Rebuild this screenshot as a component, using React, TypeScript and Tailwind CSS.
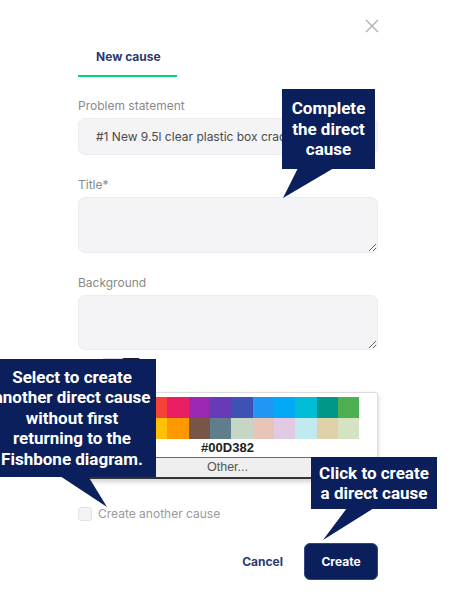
const NAVY = 'bg-[#0a1f5c]';

const row1 = ['#212121', '#9e9e9e', '#ffffff', '#f44336', '#e91e63', '#9c27b0', '#673ab7', '#3f51b5', '#2196f3', '#03a9f4', '#00bcd4', '#009688', '#4caf50'];
const row2 = ['#8bc34a', '#cddc39', '#ffeb3b', '#ffc107', '#ff9800', '#795548', '#607d8b', '#c5d6c5', '#e8c3b8', '#e1cbe2', '#c0e9f0', '#e0d2a8', '#d6e3c2'];

function Callout({ className, lines }: { className: string; lines: string[] }) {
  return (
    <div
      className={`absolute ${NAVY} flex flex-col items-center justify-center text-white font-bold text-[17px] leading-[20.5px] text-center font-['Roboto',sans-serif] ${className}`}
    >
      {lines.map(l => (
        <span key={l} className="whitespace-nowrap">{l}</span>
      ))}
    </div>
  );
}

export default function App() {
  return (
    <div className="relative w-[450px] h-[600px] bg-white overflow-hidden font-['Inter',sans-serif]">
      <div className="pt-[19px] pl-[78px] w-[378px]">
        <div className="flex justify-end">
          <svg width="14" height="14" viewBox="0 0 14 14" className="mr-[-1px]">
            <path d="M1 1L13 13M13 1L1 13" stroke="#b0b0b0" strokeWidth="1.4" />
          </svg>
        </div>

        <div className="mt-[16px] w-[99px] border-b-2 border-[#00d382] pb-[10px] pl-[18px] text-[12px] leading-[16px] font-bold text-[#2b3a70]">
          New cause
        </div>

        <div className="mt-[21px] text-[12px] leading-[16px] text-[#8a8a8a]">Problem statement</div>
        <div className="mt-[4px] h-[37px] rounded-[7px] bg-[#f4f4f6] border border-[#ededf0] flex items-center pl-[17px] pr-3 overflow-hidden whitespace-nowrap text-[12px] text-[#4a4a4a]">
          #1 New 9.5l clear plastic box cracked
        </div>

        <div className="mt-[22px] text-[12px] leading-[16px] text-[#8a8a8a]">Title*</div>
        <textarea className="mt-[4px] block w-full h-[56px] rounded-[7px] bg-[#f4f4f6] border border-[#ededf0] outline-none" />

        <div className="mt-[22px] text-[12px] leading-[16px] text-[#8a8a8a]">Background</div>
        <textarea className="mt-[4px] block w-full h-[55px] rounded-[7px] bg-[#f4f4f6] border border-[#ededf0] outline-none" />

        <div className="mt-[8px] h-[24px] flex items-start pl-[25px]">
          <div className="w-[19px] h-[18px] bg-[#d9d9df]" />
          <div className="w-[18px] h-[18px] bg-[#1c1c24] rounded-[2px]" />
        </div>

        <div className="mt-[125px] flex items-center gap-[6px] h-[14px]">
          <div className="w-[14px] h-[14px] rounded-[3px] border border-[#e2e2e6] bg-[#f4f4f6]" />
          <span className="text-[12px] leading-[16px] text-[#9a9a9a]">Create another cause</span>
        </div>

        <div className="mt-[22px] flex justify-end items-center gap-[21px]">
          <button className="text-[12px] font-bold text-[#2b3a70]">Cancel</button>
          <button className="h-[37px] w-[74px] rounded-[6px] bg-[#0a1f5c] border border-[#33467e] text-white text-[12px] font-bold">
            Create
          </button>
        </div>
      </div>

      {/* colour picker popover */}
      <div className="absolute left-[77px] top-[392px] w-[301px] h-[88px] bg-white border border-[#dcdcdc] rounded-[3px] shadow-[0_2px_5px_rgba(0,0,0,0.18)] flex flex-col">
        <div className="pt-[4px] pl-[4px] flex flex-col">
          <div className="flex">
            {row1.map(c => (
              <div key={c} className="w-[21.33px] h-[21px]" style={{ backgroundColor: c }} />
            ))}
          </div>
          <div className="flex">
            {row2.map(c => (
              <div key={c} className="w-[21.33px] h-[21px]" style={{ backgroundColor: c }} />
            ))}
          </div>
        </div>
        <div className="text-center text-[13px] leading-[18px] font-bold text-[#222] font-['Liberation_Sans',sans-serif]">
          #00D382
        </div>
        <div className="mt-auto h-[22px] bg-[#efefef] border-t border-[#6a6a6a] border-b-2 border-b-[#333] flex items-center justify-center text-[12.5px] text-[#555] font-['Liberation_Sans',sans-serif]">
          Other...
        </div>
      </div>

      {/* callouts */}
      <Callout className="left-[282px] top-[89px] w-[93px] h-[80px]" lines={['Complete', 'the direct', 'cause']} />
      <svg className="absolute left-0 top-0" width="450" height="600">
        <polygon points="298,168 334,168 283,198" fill="#0a1f5c" />
        <polygon points="60,476 88,476 107,507" fill="#0a1f5c" />
        <polygon points="347,508 374,508 323,540" fill="#0a1f5c" />
      </svg>
      <Callout
        className="left-[-12px] top-[359px] w-[168px] h-[118px]"
        lines={['Select to create', 'another direct cause', 'without first', 'returning to the', 'Fishbone diagram.']}
      />
      <Callout className="left-[311px] top-[457px] w-[126px] h-[52px]" lines={['Click to create', 'a direct cause']} />
    </div>
  );
}
